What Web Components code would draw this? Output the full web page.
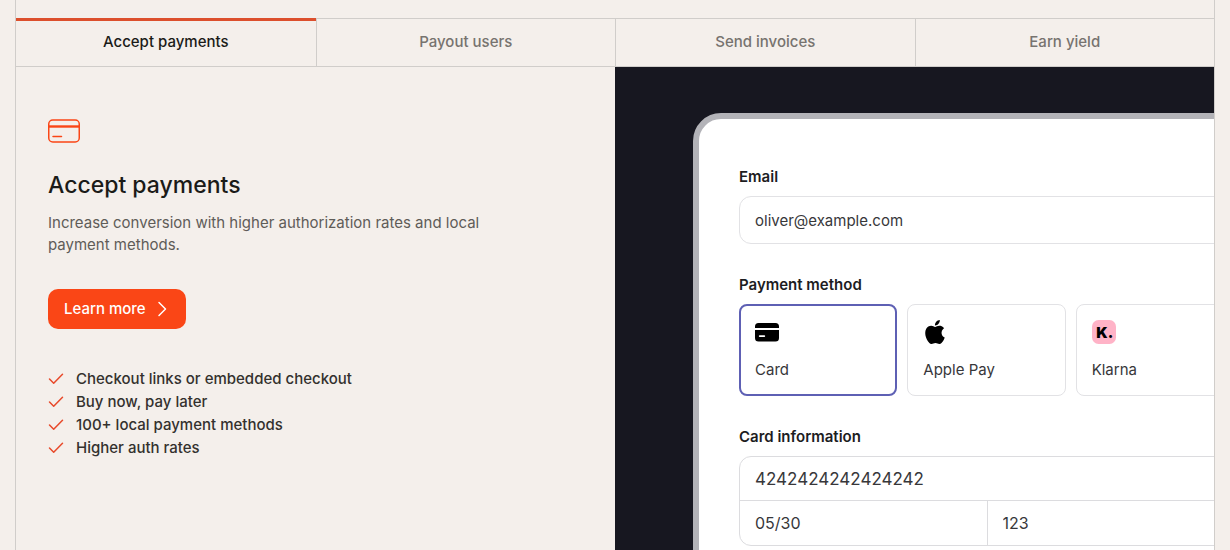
<!DOCTYPE html>
<html lang="en">
<head>
<meta charset="utf-8">
<meta name="viewport" content="width=device-width, initial-scale=1">
<title>Accept payments</title>
<style>
    :root {
        --bg: #f4efeb;
        --line: #d0cdca;
        --ink: #1b1b18;
        --muted: #5f5c58;
        --accent: #fa4616;
        --field-line: #e2e2e5;
    }
    body {
        margin: 0;
        background: var(--bg);
        color: var(--ink);
        font: 15px/22px Inter, "Liberation Sans", sans-serif;
    }
</style>
</head>
<body>
<product-tabs>
    <tab-item slot="tab" active>Accept payments</tab-item>
    <tab-item slot="tab">Payout users</tab-item>
    <tab-item slot="tab">Send invoices</tab-item>
    <tab-item slot="tab">Earn yield</tab-item>

    <feature-panel slot="panel" action="Learn more" href="#accept-payments">
        <span slot="title">Accept payments</span>
        <span slot="text">Increase conversion with higher authorization rates and local payment methods.</span>
        <check-item>Checkout links or embedded checkout</check-item>
        <check-item>Buy now, pay later</check-item>
        <check-item>100+ local payment methods</check-item>
        <check-item>Higher auth rates</check-item>
    </feature-panel>

    <checkout-preview slot="preview"></checkout-preview>
</product-tabs>

<script>
/**
 * <product-tabs>
 * Framed section: tab row on top, copy and product preview below.
 */
class ProductTabs extends HTMLElement {
    constructor() {
        super();
        this.attachShadow({ mode: 'open' });
        this.shadowRoot.innerHTML = `
            <style>
                :host { display: flex; min-height: 100vh; padding: 0 15px; box-sizing: border-box; }
                .frame {
                    flex: 1; min-width: 0;
                    display: flex; flex-direction: column;
                    padding-top: 18px;
                    border: solid var(--line); border-width: 0 1px;
                }
                .tabs {
                    display: grid; grid-template-columns: repeat(4, 1fr);
                    height: 47px;
                    border: solid var(--line); border-width: 1px 0;
                }
                .body { flex: 1; display: grid; grid-template-columns: repeat(2, minmax(0, 1fr)); }
            </style>
            <div class="frame">
                <div class="tabs" role="tablist"><slot name="tab"></slot></div>
                <div class="body"><slot name="panel"></slot><slot name="preview"></slot></div>
            </div>
        `;
    }

    connectedCallback() {
        this.addEventListener('tab-select', (e) => {
            this.querySelectorAll('tab-item').forEach((t) => t.toggleAttribute('active', t === e.target));
        });
    }
}

/**
 * <tab-item active>
 */
class TabItem extends HTMLElement {
    static get observedAttributes() { return ['active']; }

    constructor() {
        super();
        this.attachShadow({ mode: 'open' });
        this.shadowRoot.innerHTML = `
            <style>
                :host { display: flex; border-left: 1px solid var(--line); }
                :host(:first-child) { border-left: 0; }
                :host([active]) { margin-top: -1px; }
                button {
                    flex: 1; padding: 0 0 2px; border: 0; background: none;
                    font: inherit; font-weight: 500; color: #77736f; cursor: pointer;
                }
                :host([active]) button { border-top: 3px solid #dc4f2c; padding-bottom: 4px; color: var(--ink); }
            </style>
            <button type="button" role="tab"><slot></slot></button>
        `;
        this.shadowRoot.querySelector('button').addEventListener('click', () => {
            this.dispatchEvent(new CustomEvent('tab-select', { bubbles: true }));
        });
    }

    attributeChangedCallback() {
        this.shadowRoot.querySelector('button').setAttribute('aria-selected', this.hasAttribute('active'));
    }
}

/**
 * <feature-panel action href>
 * Icon, heading, copy, call to action and a list of <check-item>.
 */
class FeaturePanel extends HTMLElement {
    constructor() {
        super();
        this.attachShadow({ mode: 'open' });
    }

    connectedCallback() {
        this.shadowRoot.innerHTML = `
            <style>
                :host { display: block; padding: 52px 32px; }
                .icon { display: block; }
                h2 { margin: 26px 0 11px; font-size: 23px; line-height: 32px; font-weight: 500; }
                p { margin: 0 0 33px; max-width: 460px; color: var(--muted); }
                a {
                    display: inline-flex; align-items: center; gap: 8px;
                    height: 40px; padding: 0 16px; box-sizing: border-box; border-radius: 10px;
                    background: var(--accent); color: #fff; font-weight: 500; text-decoration: none;
                }
                .list { display: grid; margin-top: 38px; }
            </style>
            <svg class="icon" width="32" height="24" viewBox="0 0 32 24" fill="none" stroke="var(--accent)" aria-hidden="true">
                <rect x=".75" y="1" width="30.5" height="22" rx="4" stroke-width="1.5"/>
                <path d="M1 7.5h30" stroke-width="2.4"/>
                <path d="M5 17.5h8.5" stroke-width="1.5" stroke-linecap="round"/>
            </svg>
            <h2><slot name="title"></slot></h2>
            <p><slot name="text"></slot></p>
            <a href="${this.getAttribute('href')}">
                ${this.getAttribute('action')}
                <svg width="16" height="16" viewBox="0 0 16 16" fill="none" stroke="currentColor" stroke-width="1.5" stroke-linecap="round" stroke-linejoin="round" aria-hidden="true">
                    <path d="M5 1.5 11.5 8 5 14.5"/>
                </svg>
            </a>
            <div class="list" role="list"><slot></slot></div>
        `;
    }
}

class CheckItem extends HTMLElement {
    constructor() {
        super();
        this.attachShadow({ mode: 'open' });
        this.shadowRoot.innerHTML = `
            <style>
                :host { display: flex; align-items: center; gap: 12px; line-height: 23px; font-weight: 500; color: #33312e; }
            </style>
            <svg width="16" height="16" viewBox="0 0 16 16" fill="none" stroke="#e8492a" stroke-width="1.5" stroke-linecap="round" stroke-linejoin="round" aria-hidden="true">
                <path d="M1.5 8 5.7 12.2 14.5 3.2"/>
            </svg>
            <span><slot></slot></span>
        `;
    }

    connectedCallback() {
        this.setAttribute('role', 'listitem');
    }
}

/**
 * <pay-option value checked>
 * One payment method tile. The icon goes in the "icon" slot.
 */
class PayOption extends HTMLElement {
    constructor() {
        super();
        this.attachShadow({ mode: 'open' });
    }

    connectedCallback() {
        this.shadowRoot.innerHTML = `
            <style>
                :host { display: block; min-width: 0; }
                label {
                    display: flex; flex-direction: column; gap: 16px;
                    height: 92px; padding: 15px; box-sizing: border-box;
                    border: 1px solid var(--field-line); border-radius: 8px; cursor: pointer;
                }
                label:has(:checked) { padding: 14px; border: 2px solid #5e60b4; }
                input { appearance: none; width: 0; height: 0; margin: 0; position: absolute; }
                .icon { display: flex; height: 24px; }
            </style>
            <label>
                <input type="radio" name="method" value="${this.getAttribute('value')}" ${this.hasAttribute('checked') ? 'checked' : ''}>
                <span class="icon"><slot name="icon"></slot></span>
                <span><slot></slot></span>
            </label>
        `;
        this.shadowRoot.querySelector('input').addEventListener('change', () => {
            for (const other of this.parentElement.querySelectorAll('pay-option')) {
                if (other !== this) other.shadowRoot.querySelector('input').checked = false;
            }
        });
    }
}

/**
 * <checkout-preview>
 * Dark stage with a checkout form that runs past its edges.
 */
class CheckoutPreview extends HTMLElement {
    constructor() {
        super();
        this.attachShadow({ mode: 'open' });
        this.shadowRoot.innerHTML = `
            <style>
                :host { display: block; overflow: hidden; contain: size; padding: 46px 0 0 78px; background: #171720; }
                form {
                    width: 495px; padding: 48px 40px;
                    border: 6px solid #b3b3b8; border-radius: 28px;
                    background: #fff; color: #37373a; line-height: 20px;
                }
                .title { display: block; margin-bottom: 9px; font-weight: 600; color: #1d1d1f; }
                input {
                    width: 100%; min-width: 0; padding: 0 15px; box-sizing: border-box;
                    border: 0; background: none; outline: 0; font: inherit; color: inherit;
                }
                fieldset { margin: 31px 0 0; padding: 0; border: 0; }
                legend { padding: 0; }
                #email { height: 48px; border: 1px solid var(--field-line); border-radius: 12px; }
                .methods { display: grid; grid-template-columns: repeat(3, 1fr); gap: 10px; }
                .card { display: grid; grid-template-columns: 1fr 1fr; border: 1px solid #dcdcdf; border-radius: 12px; }
                .card input { height: 44px; font-size: 16px; }
                .card #number { grid-column: span 2; font-size: 17px; border-bottom: 1px solid #dcdcdf; }
                .card #cvc { border-left: 1px solid #dcdcdf; }
            </style>
            <form>
                <label class="title" for="email">Email</label>
                <input id="email" type="email" value="oliver@example.com">

                <fieldset>
                    <legend class="title">Payment method</legend>
                    <div class="methods">
                        <pay-option value="card" checked>
                            <svg slot="icon" width="24" height="24" viewBox="0 0 24 24" aria-hidden="true">
                                <path d="M0 7V6.5A3.5 3.5 0 0 1 3.5 3h17A3.5 3.5 0 0 1 24 6.5V8H0z"/>
                                <path fill-rule="evenodd" d="M0 10h24v8a3.5 3.5 0 0 1-3.5 3.5h-17A3.5 3.5 0 0 1 0 18zM4.7 15.2a.9.9 0 0 0 0 1.8h4.6a.9.9 0 0 0 0-1.8z"/>
                            </svg>
                            Card
                        </pay-option>
                        <pay-option value="apple-pay">
                            <svg slot="icon" width="24" height="24" viewBox="0 0 24 24" aria-hidden="true">
                                <path d="M12.15 6.9c-.95 0-2.42-1.08-3.96-1.04-2.04.03-3.91 1.18-4.96 3.01-2.12 3.68-.55 9.1 1.52 12.09 1.01 1.45 2.21 3.09 3.79 3.04 1.52-.07 2.09-.99 3.93-.99 1.83 0 2.35.99 3.96.95 1.64-.03 2.68-1.48 3.68-2.95 1.16-1.69 1.64-3.33 1.66-3.42-.04-.01-3.18-1.22-3.22-4.86-.03-3.04 2.48-4.49 2.6-4.56-1.43-2.09-3.62-2.32-4.39-2.38-2-.16-3.68 1.09-4.61 1.09zM15.53 3.83c.84-1.01 1.4-2.43 1.24-3.83-1.2.05-2.66.8-3.53 1.82-.78.9-1.45 2.34-1.27 3.71 1.34.1 2.71-.69 3.56-1.7z"/>
                            </svg>
                            Apple Pay
                        </pay-option>
                        <pay-option value="klarna">
                            <svg slot="icon" width="24" height="24" viewBox="0 0 24 24" aria-hidden="true">
                                <rect width="24" height="24" rx="6.5" fill="#ffb3c7"/>
                                <text x="12.8" y="18" text-anchor="middle" font-family="Inter, sans-serif" font-size="15" font-weight="900">K.</text>
                            </svg>
                            Klarna
                        </pay-option>
                    </div>
                </fieldset>

                <fieldset>
                    <legend class="title">Card information</legend>
                    <div class="card">
                        <input id="number" aria-label="Card number" inputmode="numeric" value="4242424242424242">
                        <input id="expiry" aria-label="Expiry date" value="05/30">
                        <input id="cvc" aria-label="Security code" value="123">
                    </div>
                </fieldset>
            </form>
        `;
    }
}

customElements.define('product-tabs', ProductTabs);
customElements.define('tab-item', TabItem);
customElements.define('feature-panel', FeaturePanel);
customElements.define('check-item', CheckItem);
customElements.define('pay-option', PayOption);
customElements.define('checkout-preview', CheckoutPreview);
</script>
</body>
</html>
